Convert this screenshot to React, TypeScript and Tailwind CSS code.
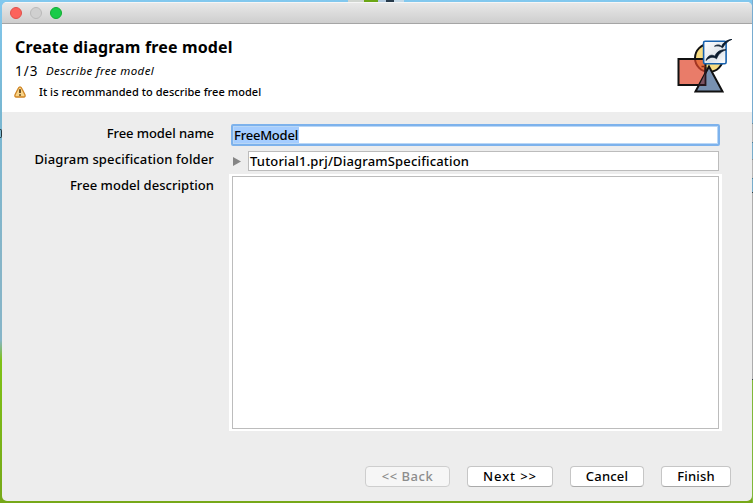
import React from 'react';

function WarningIcon() {
  return (
    <svg width="12" height="12" viewBox="0 0 12 12" className="-ml-px block">
      <path d="M6 .8C7.200.8 7.700 2 8.200 3.200L10.600 8c1 2 .5 3-1 3H2.400c-1.500 0-2-1-1-3l2.400-4.800C4.300 2 4.800.8 6 .8Z" fill="#f9d488" stroke="#cf8423" strokeWidth="1.300" />
      <path d="M6 3.200v3.900M6 8.300v1.500" stroke="#4d3510" strokeWidth="1.600" />
    </svg>
  );
}

function DiagramLogo() {
  return (
    <svg width="56" height="56" viewBox="0 0 56 56" className="block">
      <defs>
        <linearGradient id="page" x1="0" y1="0" x2="1" y2="1">
          <stop offset="0" stopColor="#fff" />
          <stop offset=".6" stopColor="#dfe5eb" />
          <stop offset="1" stopColor="#fff" />
        </linearGradient>
      </defs>
      <circle cx="32" cy="19" r="14" fill="#f8dc80" stroke="#111" strokeWidth="2" />
      <rect x="1.500" y="20" width="27" height="26" fill="#e0452a" fillOpacity=".7" stroke="#111" strokeWidth="2" />
      <path d="M32 27.500 18.500 52.500H45.500Z" fill="#7891b1" stroke="#111" strokeWidth="2" />
      <path d="M28.500 34V46h-6Z" fill="#7c5362" />
      <path d="M28.500 28v18h-7" fill="none" stroke="#28171d" strokeWidth="1.800" />
      <path d="M24.500 27.500h4" stroke="#802d18" strokeWidth="1.500" />
      <rect x="26.600" y="2.300" width="22.500" height="22.500" rx="1.500" fill="url(#page)" stroke="#1761ad" strokeWidth="1.600" />
      <path d="M37.500 7.200c3-2 5.500-1.500 7 .3C46.500 3 50 1 55 .3c-4 1.500-7 4.500-9.500 8.500-2.500-2-4.500-2.300-8-1.600Z" fill="#0a1b2d" stroke="#0a1b2d" strokeWidth=".8" />
      <path d="M29 21.500c1.500-4.500 5-6.800 9-4.200 1.500-4.500 5-6.700 11-6.500-4.500 1.500-7.500 4-9.500 9-3-2.500-6.500-2-10.500 1.700Z" fill="#0a1b2d" stroke="#0a1b2d" strokeWidth=".8" />
    </svg>
  );
}

function TitleBar() {
  return (
    <div className="flex h-[22px] shrink-0 items-center gap-2 border-b border-[#a5a5a5] border-t border-t-[#f6f6f6] bg-linear-to-b from-[#e8e8e8] to-[#cecece] pl-2">
      <span className="size-3 rounded-full border border-[#df514b] bg-[#fc635c]" />
      <span className="size-3 rounded-full border border-[#b9b9b9] bg-[#d0d0d0]" />
      <span className="size-3 rounded-full border border-[#12ac31] bg-[#1acb49]" />
    </div>
  );
}

function Header() {
  return (
    <header className="flex h-[88px] shrink-0 justify-between bg-white pl-[13px] pr-[19px]">
      <div className="whitespace-nowrap pt-3">
        <h1 className="h-[22px] text-[16px] leading-[22px] font-bold tracking-[0.15px]">Create diagram free model</h1>
        <div className="flex h-[24px] items-center pt-[2px]">
          <span className="w-[31px] text-[13.5px] tracking-[1px]">1/3</span>
          <span className="text-[11.5px] italic tracking-[0.38px]">Describe free model</span>
        </div>
        <div className="flex h-[20px] items-center">
          <span className="w-6"><WarningIcon /></span>
          <span className="text-[11px] font-medium tracking-[0.05px]">It is recommanded to describe free model</span>
        </div>
      </div>
      <div className="pt-[15px]"><DiagramLogo /></div>
    </header>
  );
}

function Label({ children, className }: { children: React.ReactNode; className: string }) {
  return <label className={`w-[212px] shrink-0 text-right text-[13px] leading-[18px] font-medium whitespace-nowrap ${className}`}>{children}</label>;
}

function Desktop() {
  return (
    <div aria-hidden="true">
      <div className="absolute top-0 left-[348px] flex h-[2px] w-[56px]">
        <span className="w-4 bg-[#d0d5d0]" />
        <span className="w-[14px] bg-[#6ba615]" />
        <span className="w-2 bg-[#b4cce0]" />
        <span className="w-2 bg-[#273a4b]" />
        <span className="w-[10px] bg-[#c5dae8]" />
      </div>
      <div className="absolute top-[129px] left-0 h-[9px] w-[2px] rounded-r-[2px] border-y border-r border-[#24373d]" />
      <div className="absolute top-0 right-0 flex h-full w-px flex-col">
        <span className="h-[123px] bg-[#78acd0]" />
        <span className="h-[19px] border-t border-[#65899a] bg-[#b4b4b4]" />
        <span className="h-[17px] border-t border-[#477b95] bg-[#78acca]" />
        <span className="h-[19px] border-t border-[#888] bg-[#b4b4b4]" />
        <span className="h-[14px] border-t border-[#477b95] bg-[#78acca]" />
        <span className="h-[188px] border-y border-[#343e42] bg-[#acacac]" />
        <span className="grow bg-[#80b83a]" />
      </div>
    </div>
  );
}

export default function App() {
  return (
    <div className="relative h-[503px] w-[753px] overflow-hidden bg-[linear-gradient(#82c8ee_0,#78b7d2_110px,#86b5c8_260px,#86b5c8_340px,#7fc217_360px,#76a819_503px)] pl-[2px] pt-[2px] font-['Noto_Sans','Open_Sans',sans-serif] text-black">
      <Desktop />
      <div className="relative flex h-[499px] w-[750px] flex-col overflow-hidden rounded-[5px] bg-[#ededed]">
        <TitleBar />
        <Header />
        <main className="flex flex-col pt-3">
          <div className="flex h-[27px]">
            <Label className="tracking-[-0.08px]">Free model name</Label>
            <div className="ml-[17px] flex h-[22px] w-[489px] items-center rounded-[2px] border-2 border-[#7db2ec] bg-white pl-px outline outline-1 -outline-offset-3 outline-[#b9d7f7]">
              <span className="h-[16px] w-[65px] bg-[#a5cdff] text-[13px] leading-[17px] font-medium tracking-[-0.22px]">FreeModel</span>
            </div>
          </div>
          <div className="flex h-[23px]">
            <Label className="-mt-px tracking-[0.14px]">Diagram specification folder</Label>
            <div className="flex w-[34px] justify-center pl-3 pt-[6px]">
              <svg width="8" height="9" viewBox="0 0 8 9"><path d="M0 0v9l8-4.500Z" fill="#858585" /></svg>
            </div>
            <div className="h-[20px] w-[471px] border border-[#bcbcbc] bg-white pl-px text-[13px] leading-[19px] font-medium tracking-[0.17px]">Tutorial1.prj/DiagramSpecification</div>
          </div>
          <div className="flex h-[257px]">
            <Label className="pt-[2px] tracking-[0.05px]">Free model description</Label>
            <div className="ml-[15px] w-[493px] bg-white px-[3px] py-[2px]">
              <div className="h-full border border-[#bcbcbc] bg-white" />
            </div>
          </div>
        </main>
        <footer className="mt-[35px] flex pl-[363px] text-[13px] font-medium tracking-[0.2px]">
          <button className="h-[21px] w-[85px] rounded-[4px] border border-[#cecece] bg-[#f6f6f6] leading-[19px] tracking-[0.5px] text-[#8c8c8c]">&lt;&lt; Back</button>
          <button className="ml-[17px] h-[21px] w-[86px] rounded-[4px] border border-[#c6c6c6] border-b-[#aaa] bg-white leading-[19px] tracking-[0.9px]">Next &gt;&gt;</button>
          <button className="ml-[17px] h-[21px] w-[74px] rounded-[4px] border border-[#c6c6c6] border-b-[#aaa] bg-white leading-[19px]">Cancel</button>
          <button className="ml-[17px] h-[21px] w-[70px] rounded-[4px] border border-[#c6c6c6] border-b-[#aaa] bg-white leading-[19px]">Finish</button>
        </footer>
      </div>
    </div>
  );
}
